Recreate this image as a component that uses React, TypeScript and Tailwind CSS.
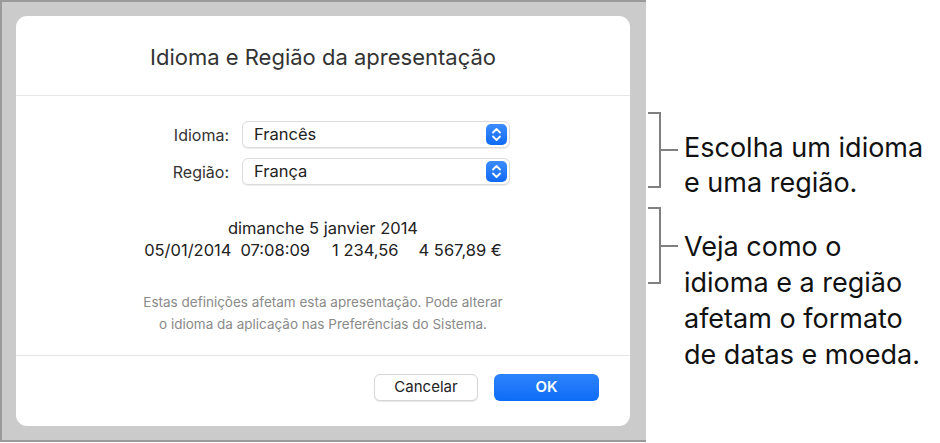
import React from 'react';

const font = { fontFamily: 'Inter, "Noto Sans", sans-serif' };

function Stepper() {
  return (
    <div className="w-[21px] h-[21px] rounded-[5px] bg-gradient-to-b from-[#3b8cff] to-[#0f6af5] flex items-center justify-center">
      <svg width="11" height="15" viewBox="0 0 11 15" fill="none">
        <path d="M2 5.5 L5.5 2 L9 5.5" stroke="white" strokeWidth="1.8" strokeLinecap="round" strokeLinejoin="round" />
        <path d="M2 9.5 L5.5 13 L9 9.5" stroke="white" strokeWidth="1.8" strokeLinecap="round" strokeLinejoin="round" />
      </svg>
    </div>
  );
}

function SelectRow({ label, value }: { label: string; value: string }) {
  return (
    <div className="flex items-center h-[27px]">
      <div className="w-[213px] text-right text-[16px] text-[#333]">{label}</div>
      <div className="ml-[13px] w-[268px] h-[27px] rounded-[6px] bg-white border border-[#dcdcdc] shadow-[0_1px_1px_rgba(0,0,0,0.08)] flex items-center justify-between pl-[11px] pr-[2px]">
        <span className="text-[16.5px] text-[#222]">{value}</span>
        <Stepper />
      </div>
    </div>
  );
}

function Bracket({ height }: { height: string }) {
  return (
    <div className={`relative w-[13px] ${height} border-t-2 border-r-2 border-b-2 border-[#808080] shrink-0`}>
      <div className="absolute left-[11px] top-1/2 -translate-y-1/2 w-[19px] h-[2px] bg-[#808080]" />
    </div>
  );
}

export default function App() {
  return (
    <div className="w-[940px] h-[443px] bg-white flex" style={font}>
      <div className="w-[646px] h-[442px] bg-[#cbcbcb] border-l-2 border-t-2 border-b-2 border-[#9a9a9a] pl-[14px] pt-[14px]">
        <div className="w-[614px] h-[410px] bg-white rounded-[11px] flex flex-col">
          <div className="h-[79px] flex items-center justify-center pt-[3px] text-[22px] text-[#333]">
            Idioma e Região da apresentação
          </div>
          <div className="h-px bg-[#e6e6e6]" />
          <div className="pt-[25px] flex flex-col gap-[10px]">
            <SelectRow label="Idioma:" value="Francês" />
            <SelectRow label="Região:" value="França" />
          </div>
          <div className="mt-[32px] text-center text-[16.5px] leading-[22px] text-[#222]">
            <div>dimanche 5 janvier 2014</div>
            <div className="flex justify-center">
              <span>05/01/2014</span>
              <span className="ml-[9px]">07:08:09</span>
              <span className="ml-[22px]">1 234,56</span>
              <span className="ml-[20px]">4 567,89 €</span>
            </div>
          </div>
          <div className="mt-[30px] text-center text-[13.5px] leading-[22px] text-[#8a8a8a]">
            <div>Estas definições afetam esta apresentação. Pode alterar</div>
            <div>o idioma da aplicação nas Preferências do Sistema.</div>
          </div>
          <div className="mt-[20px] h-px bg-[#e6e6e6]" />
          <div className="mt-[18px] flex justify-end gap-[16px] pr-[31px]">
            <button className="w-[104px] h-[27px] rounded-[6px] bg-white border border-[#d6d6d6] shadow-[0_1px_1px_rgba(0,0,0,0.1)] text-[15px] text-[#222]">
              Cancelar
            </button>
            <button className="w-[105px] h-[27px] rounded-[6px] bg-gradient-to-b from-[#2d83fb] to-[#0c6cf6] text-[15px] font-semibold text-white">
              OK
            </button>
          </div>
        </div>
      </div>
      <div className="flex-1 flex flex-col pl-[2px] pt-[112px] text-[27px] text-[#111]">
        <div className="flex h-[95px]">
          <Bracket height="h-[76px]" />
          <div className="ml-[23px] mt-[18px] leading-[35px]">
            <div>Escolha um idioma</div>
            <div>e uma região.</div>
          </div>
        </div>
        <div className="flex">
          <Bracket height="h-[77px]" />
          <div className="ml-[23px] mt-[22px] leading-[36px]">
            <div>Veja como o</div>
            <div>idioma e a região</div>
            <div>afetam o formato</div>
            <div>de datas e moeda.</div>
          </div>
        </div>
      </div>
    </div>
  );
}
